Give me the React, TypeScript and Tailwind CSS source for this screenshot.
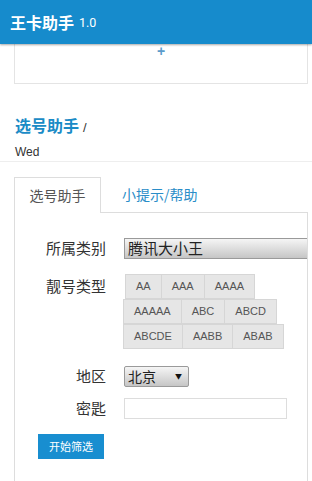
import React from "react";

const cjk = { fontFamily: "'Noto Sans CJK SC', 'Liberation Sans', sans-serif" };

const rows = [
  { ml: "ml-[2px]", items: ["AA", "AAA", "AAAA"] },
  { ml: "", items: ["AAAAA", "ABC", "ABCD"] },
  { ml: "", items: ["ABCDE", "AABB", "ABAB"] },
];

export default function App() {
  return (
    <div className="w-[312px] h-[481px] overflow-hidden bg-white text-[#333]" style={cjk}>
      <header className="h-[44px] bg-[#168bcc] flex items-center pl-[10px] shadow-[0_1px_2px_rgba(0,0,0,0.35)] relative z-10">
        <span className="text-white text-[16px] font-bold leading-none">王卡助手</span>
        <span className="text-white text-[12.5px] ml-[5px] mt-[3px] leading-none" style={{ fontFamily: "Roboto, sans-serif" }}>1.0</span>
      </header>

      <div className="ml-[14px] w-[294px] h-[40px] border-x border-b border-[#e4e4e4] flex justify-center">
        <span className="text-[#5b9ccb] text-[14px] leading-none mt-[0px] font-bold" style={{ fontFamily: "'Liberation Sans', sans-serif" }}>+</span>
      </div>

      <div className="pl-[15px] pt-[30px]">
        <div className="flex items-baseline leading-[22px]">
          <span className="text-[#1b8bc6] text-[16px] font-bold">选号助手</span>
          <span className="text-[#333] text-[13px] ml-[4px]" style={{ fontFamily: "'Liberation Sans', sans-serif" }}>/</span>
        </div>
        <div className="text-[12px] leading-[16px] mt-[5px] text-[#333]" style={{ fontFamily: "'Liberation Sans', sans-serif" }}>Wed</div>
      </div>
      <div className="h-px bg-[#eeeeee] mt-[1px]" />

      <div className="ml-[14px] w-[294px] mt-[15px]">
        <div className="flex h-[36px]">
          <div className="w-[87px] border-x border-t border-[#dddddd] bg-white flex items-center justify-center text-[14px] text-[#555] relative z-10 h-[36px]">
            选号助手
          </div>
          <div className="flex-1 flex items-center pl-[21px] text-[14px] text-[#2a8dc8] border-b border-[#dddddd]">
            小提示/帮助
          </div>
        </div>
        <div className="border-x border-[#dddddd] h-[300px] -mt-px border-t-0 overflow-hidden">
          <div className="pt-[26px]">
            <div className="flex items-center h-[21px]">
              <div className="w-[91px] shrink-0 text-right text-[15px] text-[#333]">所属类别</div>
              <div className="ml-[18px] w-[200px] shrink-0 h-[21px] border border-[#9a9a9a] bg-linear-to-b from-[#f5f5f5] to-[#c6c6c6] flex items-center pl-[3px] text-[15px] text-[#222]">
                腾讯大小王
              </div>
            </div>

            <div className="flex items-start mt-[15px]">
              <div className="w-[91px] shrink-0 text-right text-[15px] text-[#333] leading-[24px]">靓号类型</div>
              <div className="ml-[17px] flex flex-col" style={{ fontFamily: "'Liberation Sans', sans-serif" }}>
                {rows.map((r, i) => (
                  <div key={i} className={"flex " + r.ml}>
                    {r.items.map((t) => (
                      <div
                        key={t}
                        className="h-[25px] px-[10px] flex items-center justify-center bg-[#e6e6e6] border border-[#d6d6d6] -ml-px first:ml-0 text-[11px] text-[#555]"
                      >
                        {t}
                      </div>
                    ))}
                  </div>
                ))}
              </div>
            </div>

            <div className="flex items-center mt-[17px] h-[21px]">
              <div className="w-[91px] shrink-0 text-right text-[15px] text-[#333]">地区</div>
              <div className="ml-[18px] w-[65px] h-[21px] border border-[#9a9a9a] bg-linear-to-b from-[#f5f5f5] to-[#c6c6c6] flex items-center pl-[3px] pr-[6px] text-[14px] text-[#222] rounded-[2px]">
                <span className="flex-1">北京</span>
                <span className="text-[7px] text-[#111]">▼</span>
              </div>
            </div>

            <div className="flex items-center mt-[11px] h-[21px]">
              <div className="w-[91px] shrink-0 text-right text-[15px] text-[#333]">密匙</div>
              <div className="ml-[18px] w-[163px] h-[21px] border border-[#dddddd] bg-white" />
            </div>

            <div className="ml-[23px] mt-[15px] w-[66px] h-[25px] bg-[#188ed0] flex items-center justify-center text-white text-[11px]">
              开始筛选
            </div>
          </div>
        </div>
      </div>
    </div>
  );
}
